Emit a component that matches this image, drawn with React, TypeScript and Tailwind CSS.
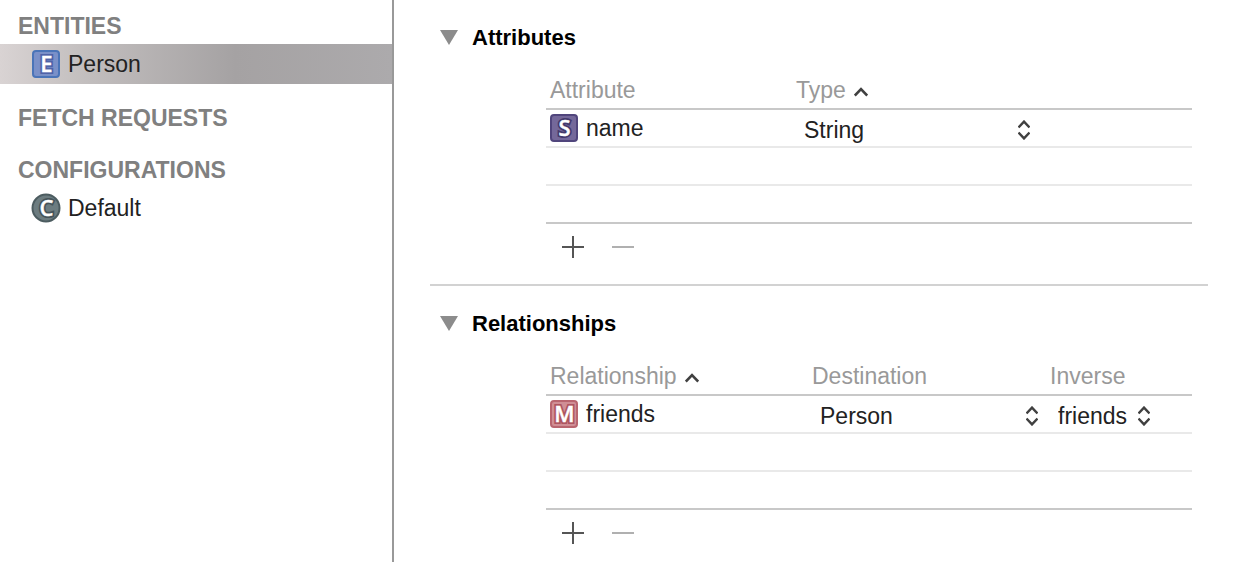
import { useState, type ReactNode } from "react";

type BadgeKind = "entity" | "configuration" | "string" | "toMany";

const badges: Record<BadgeKind, { letter: string; fill: string; border: string; outline: string; round?: boolean }> = {
  entity: { letter: "E", fill: "#7a90c8", border: "#4a74b8", outline: "#5063a8" },
  configuration: { letter: "C", fill: "#6c7c80", border: "#4c5c60", outline: "#46545a", round: true },
  string: { letter: "S", fill: "#74689a", border: "#50457c", outline: "#443a6c" },
  toMany: { letter: "M", fill: "#d08e95", border: "#b9656f", outline: "#ae5560" },
};

function Badge({ kind }: { kind: BadgeKind }) {
  const { letter, fill, border, outline, round } = badges[kind];
  return (
    <svg width="28" height="28" viewBox="0 0 28 28" className="shrink-0 overflow-visible" aria-hidden="true">
      {round ? (
        <circle cx="14" cy="14" r="13.5" fill={fill} stroke={border} strokeWidth="2" />
      ) : (
        <rect x="1" y="1" width="26" height="26" rx="3" fill={fill} stroke={border} strokeWidth="2" />
      )}
      <text
        x="14.5"
        y="22"
        textAnchor="middle"
        fontFamily="'Open Sans', sans-serif"
        fontWeight="600"
        fontSize="22"
        fill="none"
        stroke={outline}
        strokeWidth="4"
      >
        {letter}
      </text>
      <text
        x="14.5"
        y="22"
        textAnchor="middle"
        fontFamily="'Open Sans', sans-serif"
        fontWeight="600"
        fontSize="22"
        fill="#fff"
        stroke="#fff"
        strokeWidth="0.4"
      >
        {letter}
      </text>
    </svg>
  );
}

function SortArrow() {
  return (
    <svg width="14" height="10" viewBox="0 0 14 10" fill="none" stroke="#404040" strokeWidth="2.6" className="mt-1" aria-hidden="true">
      <path d="M0.8 8.6 7 2.2l6.2 6.4" />
    </svg>
  );
}

function PopUp({ label, value, options, className }: { label: string; value: string; options: string[]; className: string }) {
  const [selected, setSelected] = useState(value);
  return (
    <div className={`relative flex items-center pt-1 ${className}`}>
      <select
        aria-label={label}
        value={selected}
        onChange={(e) => setSelected(e.target.value)}
        className="h-8 w-full appearance-none bg-transparent pl-3 text-[23px] leading-8 text-[#222]"
      >
        {options.map((o) => (
          <option key={o}>{o}</option>
        ))}
      </select>
      <svg
        width="12"
        height="20"
        viewBox="0 0 12 20"
        fill="none"
        stroke="#404040"
        strokeWidth="2.4"
        className="pointer-events-none absolute right-2"
        aria-hidden="true"
      >
        <path d="M0.5 7.5 6 1.6l5.5 5.9M0.5 12.5 6 18.4l5.5-5.9" />
      </svg>
    </div>
  );
}

type Column = { title: string; width: string; sorted?: boolean };

function Section({ title, columns, cells }: { title: string; columns: Column[]; cells: ReactNode[] }) {
  const [open, setOpen] = useState(true);
  return (
    <section className="border-b-2 border-[#d2d2d2] pt-5 last:border-b-0">
      <h2 className="text-[22px] leading-9 font-bold text-black">
        <button type="button" aria-expanded={open} onClick={() => setOpen(!open)} className="flex items-center gap-3.5 pl-2.5">
          <svg width="18" height="16" viewBox="0 0 18 16" className={open ? "" : "-rotate-90"} aria-hidden="true">
            <path d="M0 0h18L9 15z" fill="#8c8c8c" />
          </svg>
          {title}
        </button>
      </h2>
      {open && (
        <div className="mt-4 mr-4 ml-[116px]">
          <table className="w-full table-fixed border-separate border-spacing-0 text-[23px] leading-8 text-[#222]">
            <thead>
              <tr>
                {columns.map((c) => (
                  <th
                    key={c.title}
                    scope="col"
                    className={`h-[38px] border-b-2 border-[#c8c8c8] p-0 pl-1 text-left font-normal text-[#999] ${c.width}`}
                  >
                    <span className="flex items-center gap-2">
                      {c.title}
                      {c.sorted && <SortArrow />}
                    </span>
                  </th>
                ))}
              </tr>
            </thead>
            <tbody>
              <tr>
                {cells.map((cell, i) => (
                  <td key={i} className="h-[38px] border-b-2 border-[#e9e9e9] p-0">
                    {cell}
                  </td>
                ))}
              </tr>
              <tr>
                <td colSpan={columns.length} className="h-[38px] border-b-2 border-[#e9e9e9] p-0" />
              </tr>
              <tr>
                <td colSpan={columns.length} className="h-[38px] border-b-2 border-[#c8c8c8] p-0" />
              </tr>
            </tbody>
          </table>
          <div className="flex gap-7 px-4 pt-3 pb-[26px]">
            <button type="button" aria-label="Add">
              <svg width="22" height="22" viewBox="0 0 22 22" className="block" aria-hidden="true">
                <path d="M0 10h22v2H0zM10 0h2v22h-2z" fill="#555" />
              </svg>
            </button>
            <button type="button" aria-label="Remove" disabled>
              <svg width="22" height="22" viewBox="0 0 22 22" className="block" aria-hidden="true">
                <path d="M0 10h22v2H0z" fill="#b0b0b0" />
              </svg>
            </button>
          </div>
        </div>
      )}
    </section>
  );
}

function NameCell({ kind, name }: { kind: BadgeKind; name: string }) {
  return (
    <div className="flex items-center gap-2 pl-1">
      <Badge kind={kind} />
      {name}
    </div>
  );
}

function Group({ title, children }: { title: string; children?: ReactNode }) {
  return (
    <section>
      <h2 className="pl-[18px] text-[23px] leading-9 font-bold text-[#808080]">{title}</h2>
      {children}
    </section>
  );
}

export default function App() {
  return (
    <div className="flex min-h-screen bg-white font-['Liberation_Sans',Arial,sans-serif]">
      <nav className="flex w-[394px] shrink-0 flex-col gap-4 border-r-2 border-[#999] pt-2 text-[#222]">
        <Group title="ENTITIES">
          <a
            href="#person"
            aria-current="page"
            className="flex h-10 items-center gap-2 bg-[linear-gradient(90deg,#d9d3d3_0%,#c2bebe_22%,#a5a2a3_60%,#acaaac_100%)] pl-8 text-[23px]"
          >
            <Badge kind="entity" />
            Person
          </a>
        </Group>
        <Group title="FETCH REQUESTS" />
        <Group title="CONFIGURATIONS">
          <a href="#default" className="flex h-10 items-center gap-2 pl-8 text-[23px]">
            <Badge kind="configuration" />
            Default
          </a>
        </Group>
      </nav>
      <main className="min-w-0 grow px-9">
        <Section
          title="Attributes"
          columns={[
            { title: "Attribute", width: "w-[246px]" },
            { title: "Type", width: "w-auto", sorted: true },
          ]}
          cells={[
            <NameCell kind="string" name="name" />,
            <PopUp label="Type" value="String" options={["String", "Integer 32", "Double", "Boolean", "Date"]} className="max-w-[246px]" />,
          ]}
        />
        <Section
          title="Relationships"
          columns={[
            { title: "Relationship", width: "w-[262px]", sorted: true },
            { title: "Destination", width: "w-[238px]" },
            { title: "Inverse", width: "w-auto" },
          ]}
          cells={[
            <NameCell kind="toMany" name="friends" />,
            <PopUp label="Destination" value="Person" options={["Person"]} className="max-w-[238px]" />,
            <PopUp label="Inverse" value="friends" options={["friends", "No Inverse"]} className="max-w-[112px]" />,
          ]}
        />
      </main>
    </div>
  );
}
